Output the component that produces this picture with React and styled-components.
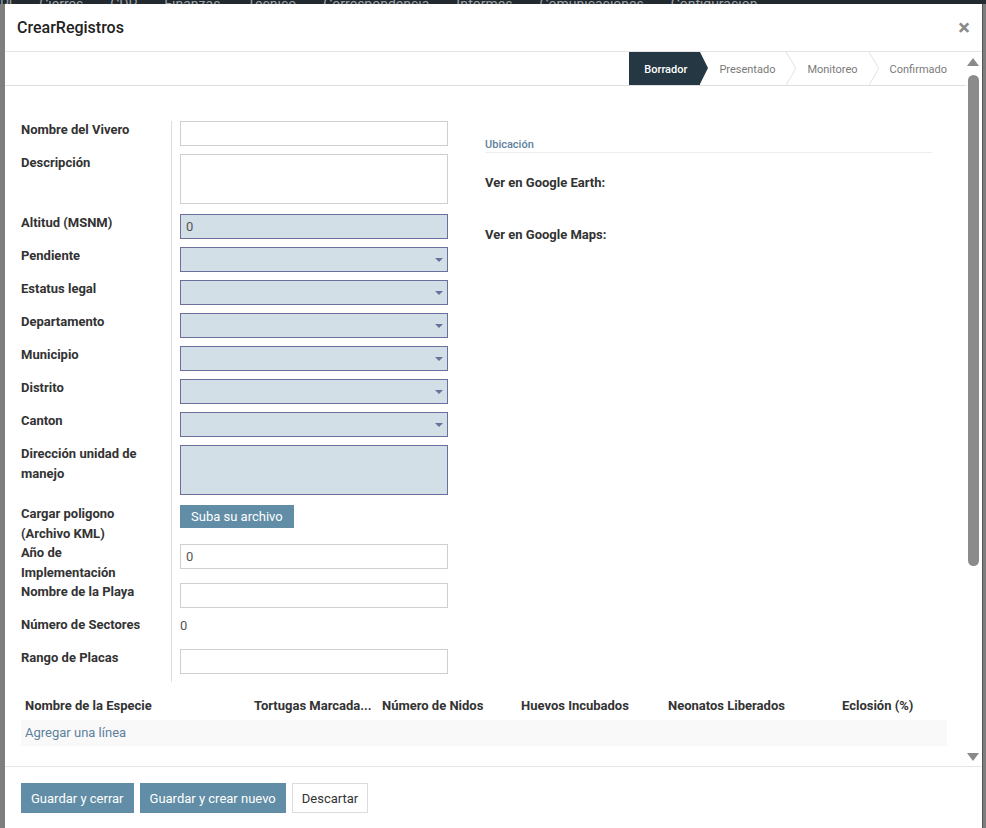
import styled, { createGlobalStyle } from 'styled-components';

const GlobalStyle = createGlobalStyle`
  body {
    margin: 0;
    font-family: Roboto, "Liberation Sans", Arial, sans-serif;
    font-size: 13px;
    color: #333;
  }
  * { box-sizing: border-box; }
`;

const Colors = {
  primary: '#618da6',
  dark: '#243742',
  link: '#5d819c',
  reqBg: '#d3dfe7',
  reqBorder: '#6c6e9c',
  line: '#dedede',
};

const NAV = ['Pl', 'Cierres', 'CDP', 'Finanzas', 'Técnico', 'Correspondencia', 'Informes', 'Comunicaciones', 'Configuracion'];

const LEFT_ROWS = [
  { label: 'Nombre del Vivero', kind: 'input' },
  { label: 'Descripción', kind: 'textarea' },
  { label: 'Altitud (MSNM)', kind: 'input', required: true, value: '0' },
  { label: 'Pendiente', kind: 'select' },
  { label: 'Estatus legal', kind: 'select' },
  { label: 'Departamento', kind: 'select' },
  { label: 'Municipio', kind: 'select' },
  { label: 'Distrito', kind: 'select' },
  { label: 'Canton', kind: 'select' },
  { label: 'Dirección unidad de manejo', kind: 'textarea', required: true },
  { label: 'Cargar poligono (Archivo KML)', kind: 'upload' },
  { label: 'Año de Implementación', kind: 'input', value: '0' },
  { label: 'Nombre de la Playa', kind: 'input' },
  { label: 'Número de Sectores', kind: 'text', value: '0' },
  { label: 'Rango de Placas', kind: 'input' },
];

const COLUMNS = [
  { title: 'Nombre de la Especie', width: 229 },
  { title: 'Tortugas Marcada...', width: 128 },
  { title: 'Número de Nidos', width: 139 },
  { title: 'Huevos Incubados', width: 147 },
  { title: 'Neonatos Liberados', width: 174 },
  { title: 'Eclosión (%)', width: 109 },
];

function App() {
  return (
    <>
      <GlobalStyle />
      <Page>
        <NavBar>
          {NAV.map((n) => (
            <NavItem key={n}>{n}</NavItem>
          ))}
        </NavBar>
        <Modal>
          <Header>
            <Title>CrearRegistros</Title>
            <Close>×</Close>
          </Header>
          <Body>
            <Content>
              <StatusBar />
              <Sheet>
                <Groups>
                  <LeftGroup>
                    {LEFT_ROWS.map((r) => (
                      <FormRow key={r.label} row={r} />
                    ))}
                  </LeftGroup>
                  <RightGroup>
                    <Separator>Ubicación</Separator>
                    <InfoLabel>Ver en Google Earth:</InfoLabel>
                    <InfoLabel>Ver en Google Maps:</InfoLabel>
                  </RightGroup>
                </Groups>
                <LinesTable />
              </Sheet>
            </Content>
            <ScrollBar />
          </Body>
          <Footer>
            <Button>Guardar y cerrar</Button>
            <Button>Guardar y crear nuevo</Button>
            <Button $secondary>Descartar</Button>
          </Footer>
        </Modal>
      </Page>
    </>
  );
}

function StatusBar() {
  return (
    <SStatusBar>
      <ActiveStage>Borrador</ActiveStage>
      <ActiveArrow />
      <Stage>Presentado</Stage>
      <Chevron />
      <Stage>Monitoreo</Stage>
      <Chevron />
      <Stage>Confirmado</Stage>
    </SStatusBar>
  );
}

function Chevron() {
  return (
    <svg width="10" height="33" viewBox="0 0 10 33">
      <polyline points="0,0 10,16.5 0,33" fill="none" stroke="#e2e2e2" strokeWidth="1" />
    </svg>
  );
}

function FormRow({ row }) {
  return (
    <>
      <Label>{row.label}</Label>
      <FieldCell $tall={row.kind === 'textarea'}>
        {row.kind === 'input' && <Input $required={row.required}>{row.value}</Input>}
        {row.kind === 'textarea' && <TextArea $required={row.required} />}
        {row.kind === 'select' && (
          <Input $required>
            <Caret />
          </Input>
        )}
        {row.kind === 'upload' && <UploadButton>Suba su archivo</UploadButton>}
        {row.kind === 'text' && <PlainValue>{row.value}</PlainValue>}
      </FieldCell>
    </>
  );
}

function Caret() {
  return (
    <CaretSvg width="8" height="4" viewBox="0 0 8 4">
      <polygon points="0,0 8,0 4,4" fill="#6c6e9c" />
    </CaretSvg>
  );
}

function LinesTable() {
  return (
    <Table>
      <HeadRow>
        {COLUMNS.map((c) => (
          <HeadCell key={c.title} $w={c.width}>
            {c.title}
          </HeadCell>
        ))}
      </HeadRow>
      <AddRow>Agregar una línea</AddRow>
    </Table>
  );
}

function ScrollBar() {
  return (
    <SScrollBar>
      <svg width="12" height="8" viewBox="0 0 12 8">
        <polygon points="0,8 12,8 6,0" fill="#8a8a8a" />
      </svg>
      <Thumb />
      <svg width="12" height="8" viewBox="0 0 12 8">
        <polygon points="0,0 12,0 6,8" fill="#8a8a8a" />
      </svg>
    </SScrollBar>
  );
}

const Page = styled.div`
  position: relative;
  width: 986px;
  height: 828px;
  overflow: hidden;
  background: #7e7e7e;
`;

const NavBar = styled.div`
  height: 4px;
  background: #22292f;
  display: flex;
  align-items: flex-end;
  gap: 27px;
  overflow: hidden;
`;

const NavItem = styled.span`
  font-size: 14px;
  line-height: 14px;
  margin-bottom: -7px;
  color: #9ca3a8;
  white-space: nowrap;
`;

const Modal = styled.div`
  position: absolute;
  top: 4px;
  left: 5px;
  width: 977px;
  height: 824px;
  background: #fff;
  display: flex;
  flex-direction: column;
  box-shadow: 1px 0 0 #555;
`;

const Header = styled.div`
  height: 48px;
  flex: none;
  border-bottom: 1px solid #e5e5e5;
  display: flex;
  align-items: center;
  justify-content: space-between;
  padding: 0 12px 0 12px;
`;

const Title = styled.h4`
  margin: 0;
  font-size: 16px;
  font-weight: 500;
  color: #222;
`;

const Close = styled.span`
  font-size: 22px;
  font-weight: 700;
  color: #8a8a8a;
  line-height: 1;
`;

const Body = styled.div`
  height: 714px;
  flex: none;
  display: flex;
`;

const Content = styled.div`
  flex: 1;
  overflow: hidden;
`;

const SStatusBar = styled.div`
  height: 34px;
  border-bottom: 1px solid ${Colors.line};
  display: flex;
  justify-content: flex-end;
  align-items: stretch;
  padding-right: 8px;
`;

const ActiveStage = styled.div`
  background: ${Colors.dark};
  color: #fff;
  font-size: 11px;
  font-weight: 500;
  display: flex;
  align-items: center;
  padding: 1px 13px 0 15px;
`;

const ActiveArrow = styled.div`
  width: 0;
  height: 0;
  border-left: 8px solid ${Colors.dark};
  border-top: 16.5px solid transparent;
  border-bottom: 16.5px solid transparent;
`;

const Stage = styled.div`
  color: #7a7a7a;
  font-size: 11px;
  display: flex;
  align-items: center;
  padding: 1px 11px 0;
`;

const Sheet = styled.div`
  padding: 35px 19px 0 16px;
`;

const Groups = styled.div`
  display: grid;
  grid-template-columns: 427px 447px;
  column-gap: 37px;
`;

const LeftGroup = styled.div`
  display: grid;
  grid-template-columns: 150px 277px;
  align-items: start;
`;

const Label = styled.div`
  font-weight: 700;
  line-height: 20px;
  margin-top: -1px;
  padding-right: 16px;
  color: #333;
`;

const FieldCell = styled.div`
  align-self: stretch;
  border-left: 1px solid ${Colors.line};
  padding-left: 8px;
  padding-bottom: ${(p) => (p.$tall ? '10px' : '8px')};
`;

const Input = styled.div`
  position: relative;
  height: 25px;
  width: 268px;
  border: 1px solid ${(p) => (p.$required ? Colors.reqBorder : '#cfcfcf')};
  background: ${(p) => (p.$required ? Colors.reqBg : '#fff')};
  padding: 0 5px;
  line-height: 23px;
  color: #555;
`;

const TextArea = styled.div`
  height: 50px;
  width: 268px;
  border: 1px solid ${(p) => (p.$required ? Colors.reqBorder : '#cfcfcf')};
  background: ${(p) => (p.$required ? Colors.reqBg : '#fff')};
`;

const CaretSvg = styled.svg`
  position: absolute;
  right: 4px;
  top: 10px;
`;

const UploadButton = styled.button`
  height: 23px;
  border: none;
  background: ${Colors.primary};
  color: #fff;
  font-family: inherit;
  font-size: 13px;
  padding: 0 11px;
`;

const PlainValue = styled.div`
  height: 25px;
  line-height: 19px;
  color: #555;
`;

const RightGroup = styled.div`
  padding-top: 17px;
`;

const Separator = styled.div`
  font-size: 11px;
  font-weight: 500;
  color: ${Colors.link};
  line-height: 14px;
  padding-bottom: 0;
  border-bottom: 1px solid #eee;
  margin-bottom: 20px;
`;

const InfoLabel = styled.div`
  font-weight: 700;
  line-height: 19px;
  height: 52px;
  color: #333;
`;

const Table = styled.div`
  margin-top: 10px;
`;

const HeadRow = styled.div`
  display: flex;
  height: 28px;
`;

const HeadCell = styled.div`
  width: ${(p) => p.$w}px;
  flex: none;
  padding: 0 4px;
  line-height: 28px;
  font-weight: 700;
  color: #333;
  white-space: nowrap;
  overflow: hidden;
`;

const AddRow = styled.div`
  height: 26px;
  line-height: 26px;
  background: #f9f9f9;
  padding-left: 4px;
  color: ${Colors.link};
`;

const SScrollBar = styled.div`
  width: 16px;
  flex: none;
  display: flex;
  flex-direction: column;
  align-items: center;
  padding: 6px 2px 5px 0;
`;

const Thumb = styled.div`
  width: 11px;
  height: 491px;
  margin-top: 9px;
  margin-bottom: auto;
  border-radius: 6px;
  background: #8b8b8b;
`;

const Footer = styled.div`
  flex: 1;
  border-top: 1px solid #e5e5e5;
  padding: 16px 16px;
  display: flex;
  align-items: flex-start;
  gap: 6px;
`;

const Button = styled.button`
  height: 30px;
  border: 1px solid ${(p) => (p.$secondary ? '#dcdcdc' : Colors.primary)};
  background: ${(p) => (p.$secondary ? '#fff' : Colors.primary)};
  color: ${(p) => (p.$secondary ? '#333' : '#fff')};
  font-family: inherit;
  font-size: 13px;
  padding: 0 9px;
`;

export default App;
